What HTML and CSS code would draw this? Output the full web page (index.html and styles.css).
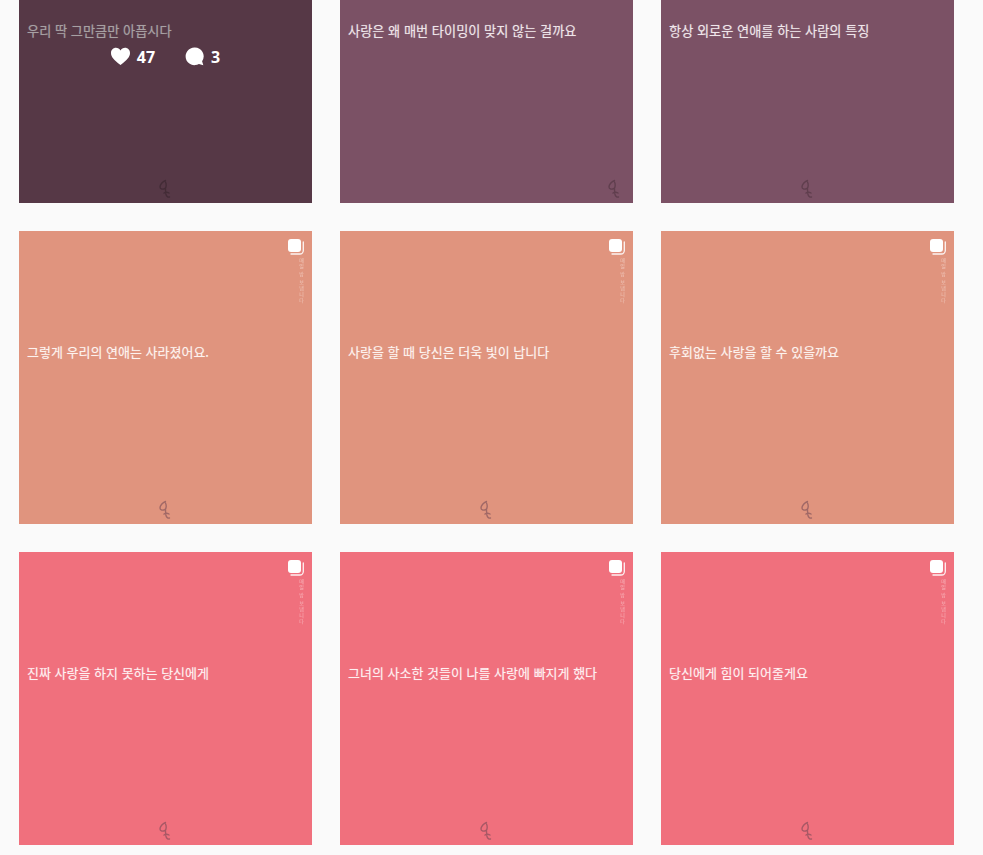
FILE: index.html
```html
<!DOCTYPE html>
<html lang="ko">
<head>
    <meta charset="UTF-8">
    <meta name="viewport" content="width=device-width, initial-scale=1.0">
    <title>게시물</title>
    <link rel="stylesheet" href="styles.css">
</head>
<body>
    <svg class="defs" width="0" height="0" aria-hidden="true">
        <symbol id="mark" viewBox="0 0 14 20">
            <path d="M7.500 1.500 C4.500 2.500 2 5.500 2 8 C2 10.500 5 10.500 7 9.500 C8.500 8.500 8.500 5 7.500 3 M7.500 9.500 C7.500 12 7.500 14 8 15.500 C8.500 17.500 10 18.500 11.500 18 M6 14 C7.500 13 9.500 13 11 14" fill="none" stroke="currentColor" stroke-width="1.400" stroke-linecap="round"/>
        </symbol>
        <symbol id="stack" viewBox="0 0 18 18">
            <path d="M16.300 4 V12.500 A3.500 3.500 0 0 1 12.800 16 H4" fill="none" stroke="#fff" stroke-width="1.300" stroke-linecap="round" opacity="0.9"/>
            <rect x="1" y="1" width="13" height="13" rx="3" fill="#fff"/>
        </symbol>
    </svg>

    <div class="grid">
        <!-- 윗줄은 스크롤로 잘려 있음 -->
        <div class="tile tile-plum">
            <p class="caption">우리 딱 그만큼만 아픕시다</p>
            <svg class="mark"><use href="#mark"/></svg>
            <div class="hover-layer">
                <span class="stat">
                    <svg class="stat-icon" viewBox="0 0 20 20"><path d="M10 19 C3 13.500 0 10.500 0 6.300 C0 3 2.400 .800 5.200 .800 C7.200 .800 9 1.800 10 3.600 C11 1.800 12.800 .800 14.800 .800 C17.600 .800 20 3 20 6.300 C20 10.500 17 13.500 10 19 Z" fill="#fff"/></svg>
                    47
                </span>
                <span class="stat">
                    <svg class="stat-icon" viewBox="0 0 20 20"><path d="M10 .500 A9.300 9.300 0 1 0 14.700 17.800 L19.300 19.300 L18 15 A9.300 9.300 0 0 0 10 .500 Z" fill="#fff"/></svg>
                    3
                </span>
            </div>
        </div>
        <div class="tile tile-plum">
            <p class="caption">사랑은 왜 매번 타이밍이 맞지 않는 걸까요</p>
            <svg class="mark mark-side"><use href="#mark"/></svg>
        </div>
        <div class="tile tile-plum">
            <p class="caption">항상 외로운 연애를 하는 사람의 특징</p>
            <svg class="mark"><use href="#mark"/></svg>
        </div>

        <div class="tile tile-peach">
            <svg class="stack"><use href="#stack"/></svg>
            <span class="side-note">매일 밤 보냅니다</span>
            <p class="caption">그렇게 우리의 연애는 사라졌어요.</p>
            <svg class="mark"><use href="#mark"/></svg>
        </div>
        <div class="tile tile-peach">
            <svg class="stack"><use href="#stack"/></svg>
            <span class="side-note">매일 밤 보냅니다</span>
            <p class="caption">사랑을 할 때 당신은 더욱 빛이 납니다</p>
            <svg class="mark"><use href="#mark"/></svg>
        </div>
        <div class="tile tile-peach">
            <svg class="stack"><use href="#stack"/></svg>
            <span class="side-note">매일 밤 보냅니다</span>
            <p class="caption">후회없는 사랑을 할 수 있을까요</p>
            <svg class="mark"><use href="#mark"/></svg>
        </div>

        <div class="tile tile-pink">
            <svg class="stack"><use href="#stack"/></svg>
            <span class="side-note">매일 밤 보냅니다</span>
            <p class="caption">진짜 사랑을 하지 못하는 당신에게</p>
            <svg class="mark"><use href="#mark"/></svg>
        </div>
        <div class="tile tile-pink">
            <svg class="stack"><use href="#stack"/></svg>
            <span class="side-note">매일 밤 보냅니다</span>
            <p class="caption">그녀의 사소한 것들이 나를 사랑에 빠지게 했다</p>
            <svg class="mark"><use href="#mark"/></svg>
        </div>
        <div class="tile tile-pink">
            <svg class="stack"><use href="#stack"/></svg>
            <span class="side-note">매일 밤 보냅니다</span>
            <p class="caption">당신에게 힘이 되어줄게요</p>
            <svg class="mark"><use href="#mark"/></svg>
        </div>
    </div>
</body>
</html>
```

FILE: styles.css
```css
* {
    margin: 0;
    padding: 0;
    box-sizing: border-box;
}

html,
body {
    height: 100%;
    overflow: hidden;
}

body {
    background-color: #fafafa;
    font-family: "Noto Sans CJK KR", "Noto Sans", sans-serif;
}

.defs {
    position: absolute;
}

.grid {
    display: grid;
    grid-template-columns: repeat(3, 293px);
    grid-auto-rows: 293px;
    gap: 28px;
    margin-top: -90px;
    padding-left: 19px;
}

.tile {
    position: relative;
    display: flex;
    flex-direction: column;
    padding: 112px 8px 4px;
    overflow: hidden;
}

.tile-plum {
    background-color: #7b5165;
    color: #efe6ea;
}

.tile-peach {
    background-color: #e0947e;
    color: #fdf3ef;
}

.tile-pink {
    background-color: #f0707d;
    color: #fef0f1;
}

.caption {
    font-size: 13px;
    line-height: 18px;
    white-space: nowrap;
    text-shadow: 0 0 1px rgba(255, 255, 255, 0.4);
}

.tile-plum .caption {
    font-size: 13.2px;
}

.mark {
    width: 14px;
    height: 20px;
    margin-top: auto;
    margin-right: 2px;
    align-self: center;
    color: #6e4553;
    opacity: 0.55;
    filter: blur(0.5px);
}

.tile-plum .mark {
    color: #4a2f3b;
}

.tile-plum .mark-side {
    align-self: flex-end;
    margin-right: 4px;
}

.stack {
    position: absolute;
    top: 7px;
    right: 7px;
    width: 18px;
    height: 18px;
}

.side-note {
    position: absolute;
    top: 27px;
    right: 8px;
    writing-mode: vertical-rl;
    font-size: 5px;
    line-height: 5px;
    letter-spacing: 0.800px;
    opacity: 0.5;
}

.hover-layer {
    position: absolute;
    inset: 0;
    background-color: rgba(0, 0, 0, 0.3);
    display: flex;
    align-items: center;
    justify-content: center;
    gap: 30px;
    color: #fff;
    font-family: "Open Sans", sans-serif;
    font-size: 16px;
    font-weight: 700;
}

.stat {
    display: flex;
    align-items: center;
    gap: 7px;
}

.stat-icon {
    width: 19px;
    height: 19px;
}
```
